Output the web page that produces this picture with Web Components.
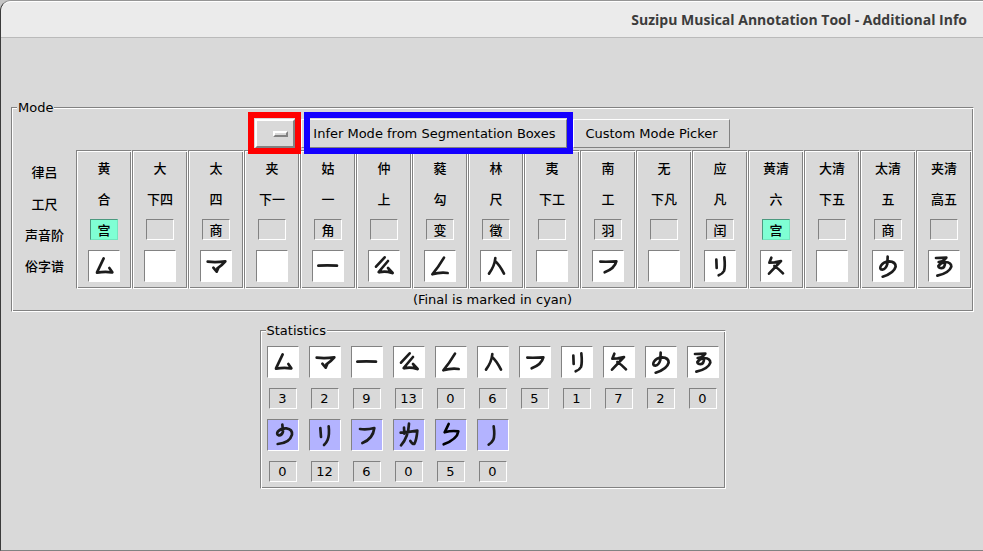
<!DOCTYPE html>
<html lang="zh">
<head>
<meta charset="utf-8">
<title>Suzipu Musical Annotation Tool - Additional Info</title>
<style>
:root { --face: #d9d9d9; --dark: #828282; --light: #ffffff; }
html, body { margin: 0; background: #c4c4c4; }
body { font: 13px/17px "DejaVu Sans", "Noto Sans CJK SC", sans-serif; color: #000; }
</style>
</head>
<body>
<app-window>
  <span slot="title">Suzipu Musical Annotation Tool - Additional Info</span>
  <label-frame caption="Mode"><mode-panel></mode-panel></label-frame>
  <label-frame caption="Statistics" compact><notation-statistics></notation-statistics></label-frame>
</app-window>
<script>
const GLYPHS = {
  mu: 'M47 25 L27 67 M27 68 Q50 64 71 67 M64 54 L73 67',
  ma: 'M23 35 Q48 38 76 34 Q66 46 52 55 M40 53 L50 65 M50 65 L55 54',
  yi: 'M19 47 Q45 45 75 47',
  yao: 'M50 22 L24 50 M60 33 L32 66 M34 67 Q52 62 72 69 M60 54 L74 69',
  gou: 'M60 23 Q44 50 25 73 Q48 66 71 69',
  ren: 'M46 24 Q44 48 27 71 M46 34 Q58 44 72 71',
  fu: 'M25 35 Q50 36 73 34 Q68 55 38 67',
  li: 'M37 29 L38 54 M61 22 Q64 50 60 63 Q56 71 44 76',
  jiu: 'M34 23 L28 38 L44 37 L63 33 L27 71 M43 48 Q57 57 69 70',
  wu: 'M47 20 L46 42 Q42 57 31 59 Q21 58 27 47 Q34 35 51 34 Q71 35 71 50 Q66 70 32 80',
  gao: 'M24 24 L55 23 Q47 34 32 36 M48 31 Q55 48 44 54 Q32 56 31 48 Q38 38 52 36 Q70 37 70 50 Q64 69 28 77',
  wu2: 'M46 17 L48 38 Q45 50 35 49 Q27 45 33 37 Q42 27 58 28 Q77 31 75 47 Q68 73 32 75',
  li2: 'M34 27 L36 54 M59 22 Q62 47 56 62 Q53 70 45 78',
  fu2: 'M27 30 Q48 33 70 27 Q66 60 34 72',
  li4: 'M33 26 L34 44 M23 41 Q48 39 73 35 Q71 61 64 75 Q58 76 52 66 M48 14 Q46 55 24 79',
  bao: 'M41 15 L29 40 Q50 34 70 37 Q67 60 26 76',
  pie: 'M50 22 Q54 49 49 62 Q44 72 35 77'
};

class BaseElement extends HTMLElement {
  render(css, html) {
    if (this.shadowRoot) return;
    this.attachShadow({ mode: 'open' }).innerHTML = `<style>${css}</style>${html}`;
  }
}

customElements.define('app-window', class extends BaseElement {
  connectedCallback() {
    this.render(`
      :host { display: flex; flex-direction: column; box-sizing: border-box; min-height: 100vh;
        background: var(--face); border-left: 1px solid #3a3a3a; border-top: 1px solid #959595;
        border-bottom: 1px solid var(--dark); border-top-left-radius: 11px; }
      header { box-sizing: border-box; height: 37px; padding-right: 16px; display: flex; align-items: center;
        justify-content: flex-end; background: #ebebeb; border-top: 1px solid #fff;
        border-bottom: 1px solid #bababa; border-top-left-radius: 10px; }
      h1 { margin: 0; font: bold 14px/20px "Open Sans", sans-serif; color: #3c3c3c; }
      main { display: flex; flex-direction: column; gap: 10px; padding: 61px 9px 20px 10px; }
    `, `<header><h1><slot name="title"></slot></h1></header><main><slot></slot></main>`);
  }
});

customElements.define('label-frame', class extends BaseElement {
  connectedCallback() {
    this.render(`
      :host { display: block; }
      :host([compact]) { align-self: center; }
      fieldset { margin: 0; min-width: 0; padding: 0 1px 1px; border: 1px solid;
        border-color: var(--dark) var(--light) var(--light) var(--dark);
        box-shadow: inset 1px 1px var(--light), inset -1px -1px var(--dark); }
      :host([compact]) fieldset { padding: 7px 6px 6px; }
      legend { height: 17px; padding: 0 1px; margin-left: 4px; background: var(--face); }
      :host([compact]) legend { margin-left: -1px; }
    `, `<fieldset><legend>${this.getAttribute('caption')}</legend><slot></slot></fieldset>`);
  }
});

customElements.define('mode-menu', class extends BaseElement {
  connectedCallback() {
    this.render(`
      :host { display: grid; position: relative; width: 40px; height: 29px; }
      :host::after { content: ""; position: absolute; inset: -7px -6px -6px -7px;
        border: 6px solid #f00; pointer-events: none; z-index: 1; }
      select, span { grid-area: 1 / 1; box-sizing: border-box; border: 2px solid;
        border-color: var(--light) var(--dark) var(--dark) var(--light); }
      select { appearance: none; width: 100%; height: 100%; margin: 0; border-radius: 0; background: var(--face); }
      span { width: 15px; height: 6px; margin-right: 7px; place-self: center end; pointer-events: none; }
    `, `<select aria-label="Mode"><option value=""></option></select><span></span>`);
  }
});

customElements.define('push-button', class extends BaseElement {
  connectedCallback() {
    this.render(`
      :host { display: block; position: relative; }
      :host([highlighted])::after { content: ""; position: absolute; inset: -7px -6px -6px 3px;
        border: 6px solid #1400ff; pointer-events: none; z-index: 1; }
      button { display: block; height: 29px; margin: 0; padding: 0 11px; font: inherit; color: inherit;
        white-space: nowrap; background: var(--face); border: 1px solid; border-radius: 0;
        border-color: var(--light) var(--dark) var(--dark) var(--light); }
    `, `<button type="button"><slot></slot></button>`);
  }
});

customElements.define('sunken-cell', class extends BaseElement {
  connectedCallback() {
    this.render(`
      :host { display: block; box-sizing: border-box; width: 28px; height: 21px; margin: 0 auto;
        border: 1px solid; border-color: var(--dark) var(--light) var(--light) var(--dark);
        line-height: 19px; text-align: center; }
      :host([final]) { background: #7fffd4; border-color: #4c997f #72e5be #72e5be #4c997f; }
    `, `<slot></slot>`);
  }
});

customElements.define('suzipu-glyph', class extends BaseElement {
  connectedCallback() {
    const d = GLYPHS[this.getAttribute('name')];
    this.render(`
      :host { display: block; box-sizing: border-box; width: 32px; height: 32px; margin: 0 auto;
        background: #fff; border: 1px solid; border-color: var(--dark) var(--light) var(--light) var(--dark); }
      :host([variant]) { background: #b3b3ff; }
      svg { display: block; }
      path { fill: none; stroke: #1c1c1c; stroke-width: 8; stroke-linecap: round; stroke-linejoin: round; }
      :host([name=bao]) path { stroke: #000; }
    `, d ? `<svg width="30" height="30" viewBox="3 3 90 90" aria-hidden="true"><path d="${d}"/></svg>` : '');
  }
});

const TONES = [
  ['黄', '合', '宫', 'mu'], ['大', '下四', '', ''], ['太', '四', '商', 'ma'], ['夹', '下一', '', ''],
  ['姑', '一', '角', 'yi'], ['仲', '上', '', 'yao'], ['蕤', '勾', '变', 'gou'], ['林', '尺', '徵', 'ren'],
  ['夷', '下工', '', ''], ['南', '工', '羽', 'fu'], ['无', '下凡', '', ''], ['应', '凡', '闰', 'li'],
  ['黄清', '六', '宫', 'jiu'], ['大清', '下五', '', ''], ['太清', '五', '商', 'wu'], ['夹清', '高五', '', 'gao']
];

customElements.define('mode-panel', class extends BaseElement {
  connectedCallback() {
    const cell = [
      t => t[0],
      t => t[1],
      t => `<sunken-cell${t[2] === '宫' ? ' final' : ''}>${t[2]}</sunken-cell>`,
      t => `<suzipu-glyph name="${t[3]}"></suzipu-glyph>`
    ];
    const rows = ['律吕', '工尺', '声音阶', '俗字谱'].map((name, i) =>
      `<tr><th scope="row">${name}</th>${TONES.map(t => `<td>${cell[i](t)}</td>`).join('')}</tr>`).join('');
    this.render(`
      :host { display: block; }
      .controls { display: flex; justify-content: center; gap: 6px; padding: 3px 0 2px; }
      table { width: 100%; table-layout: fixed; border-collapse: separate; border-spacing: 0; }
      th, td { box-sizing: border-box; height: 31px; padding: 0; font-family: "Noto Sans CJK SC", sans-serif;
        font-weight: 500; line-height: 20px; text-align: center; white-space: nowrap; }
      th { width: 63px; padding-top: 10px; }
      td { border: 0 solid; border-color: var(--dark) var(--light) var(--light) var(--dark);
        border-left-width: 1px; border-right-width: 1px;
        box-shadow: inset 1px 0 var(--light), inset -1px 0 var(--dark); }
      tr:first-child > * { height: 33px; }
      tr:first-child td { border-top-width: 1px; padding-top: 1px;
        box-shadow: inset 1px 1px var(--light), inset -1px 0 var(--dark); }
      tr:last-child > * { height: 44px; }
      tr:last-child th { padding-top: 0; padding-bottom: 2px; }
      tr:last-child td { border-bottom-width: 1px; padding-bottom: 1px;
        box-shadow: inset 1px 0 var(--light), inset -1px -1px var(--dark); }
      p { margin: 0; text-align: center; line-height: 21px; }
    `, `
      <div class="controls">
        <mode-menu></mode-menu>
        <push-button highlighted>Infer Mode from Segmentation Boxes</push-button>
        <push-button>Custom Mode Picker</push-button>
      </div>
      <table>${rows}</table>
      <p>(Final is marked in cyan)</p>`);
  }
});

const COUNTS = [
  ['mu', 3], ['ma', 2], ['yi', 9], ['yao', 13], ['gou', 0], ['ren', 6], ['fu', 5], ['li', 1], ['jiu', 7],
  ['wu', 2], ['gao', 0], ['wu2', 0, 1], ['li2', 12, 1], ['fu2', 6, 1], ['li4', 0, 1], ['bao', 5, 1], ['pie', 0, 1]
];

customElements.define('notation-statistics', class extends BaseElement {
  connectedCallback() {
    this.render(`
      :host { display: block; }
      ul { display: grid; grid-template-columns: repeat(11, 32px); gap: 10px; margin: 0; padding: 0; list-style: none; }
      li { display: grid; gap: 10px; }
    `, `<ul>${COUNTS.map(([g, n, v]) =>
      `<li><suzipu-glyph name="${g}"${v ? ' variant' : ''}></suzipu-glyph><sunken-cell>${n}</sunken-cell></li>`).join('')}</ul>`);
  }
});
</script>
</body>
</html>
